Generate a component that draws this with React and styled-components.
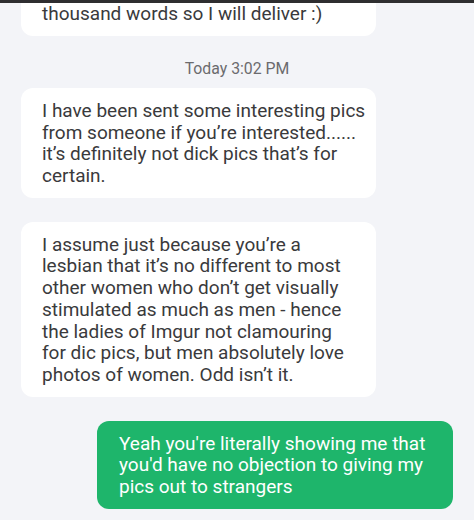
import React from "react";
import styled, { createGlobalStyle } from "styled-components";

const Global = createGlobalStyle`
  html, body { margin: 0; padding: 0; background: #f3f4f8; overflow: hidden; }
  body { font-family: Roboto, "Noto Sans", "Liberation Sans", sans-serif; }
`;

const Screen = styled.div`
  position: relative;
  width: 474px;
  height: 520px;
  overflow: hidden;
  background: #f3f4f8;
`;

const StatusEdge = styled.div`
  position: absolute;
  top: 0;
  left: 0;
  right: 0;
  height: 3px;
  background: #2e2e30;
  z-index: 2;
`;

const Thread = styled.div`
  display: flex;
  flex-direction: column;
  gap: 24px;
  padding: 0 21px;
  margin-top: -30px;
`;

const Bubble = styled.div`
  box-sizing: border-box;
  width: ${(p) => (p.$sent ? "356px" : "355px")};
  align-self: ${(p) => (p.$sent ? "flex-end" : "flex-start")};
  background: ${(p) => (p.$sent ? "#1eb56b" : "#ffffff")};
  color: ${(p) => (p.$sent ? "#ffffff" : "#3a3a3c")};
  border-radius: 12px;
  padding: 11.5px 8px 11.5px ${(p) => (p.$sent ? "22px" : "21px")};
  font-size: 19px;
  line-height: 21.7px;
  white-space: pre-line;
`;

const Timestamp = styled.div`
  text-align: center;
  font-size: 15.8px;
  line-height: 18px;
  color: #6b6b6e;
  margin-bottom: -14px;
`;

const messages = [
  { type: "in", text: "They say a picture paints a\nthousand words so I will deliver :)" },
  { type: "time", text: "Today 3:02 PM" },
  {
    type: "in",
    text: "I have been sent some interesting pics\nfrom someone if you\u2019re interested......\nit\u2019s definitely not dick pics that\u2019s for\ncertain.",
  },
  {
    type: "in",
    text: "I assume just because you\u2019re a\nlesbian that it\u2019s no different to most\nother women who don\u2019t get visually\nstimulated as much as men - hence\nthe ladies of Imgur not clamouring\nfor dic pics, but men absolutely love\nphotos of women. Odd isn\u2019t it.",
  },
  {
    type: "out",
    text: "Yeah you're literally showing me that\nyou'd have no objection to giving my\npics out to strangers",
  },
];

export default function App() {
  return (
    <Screen>
      <Global />
      <StatusEdge />
      <Thread>
        {messages.map((m, i) =>
          m.type === "time" ? (
            <Timestamp key={i}>{m.text}</Timestamp>
          ) : (
            <Bubble key={i} $sent={m.type === "out"}>
              {m.text}
            </Bubble>
          )
        )}
      </Thread>
    </Screen>
  );
}
